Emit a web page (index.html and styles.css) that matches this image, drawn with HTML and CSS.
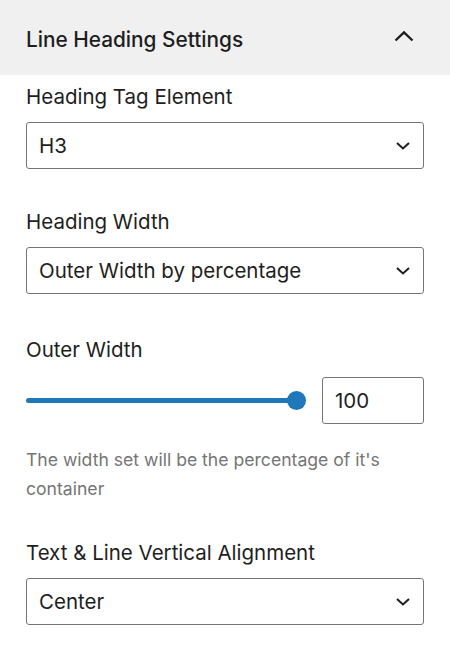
FILE: index.html
```html
<!DOCTYPE html>
<html>
<head>
<meta charset="utf-8">
<link rel="stylesheet" href="styles.css">
</head>
<body>
<div class="panel">
  <div class="panel-header">
    <span class="panel-title">Line Heading Settings</span>
    <svg class="chev-up" width="20" height="12" viewBox="0 0 20 12"><path d="M1.5 10.5 L10 2.5 L18.5 10.5" fill="none" stroke="#1e1e1e" stroke-width="2.4"/></svg>
  </div>
  <div class="panel-body">
    <div class="field first">
      <div class="label">Heading Tag Element</div>
      <div class="select"><span>H3</span><svg class="chev-down" width="14" height="8" viewBox="0 0 14 8"><path d="M1 1 L7 6.5 L13 1" fill="none" stroke="#1e1e1e" stroke-width="2"/></svg></div>
    </div>
    <div class="field">
      <div class="label">Heading Width</div>
      <div class="select"><span>Outer Width by percentage</span><svg class="chev-down" width="14" height="8" viewBox="0 0 14 8"><path d="M1 1 L7 6.5 L13 1" fill="none" stroke="#1e1e1e" stroke-width="2"/></svg></div>
    </div>
    <div class="field range-field">
      <div class="label">Outer Width</div>
      <div class="range-row">
        <div class="slider"><div class="track"></div><div class="thumb"></div></div>
        <div class="num">100</div>
      </div>
      <p class="help">The width set will be the percentage of it's container</p>
    </div>
    <div class="field last">
      <div class="label">Text &amp; Line Vertical Alignment</div>
      <div class="select"><span>Center</span><svg class="chev-down" width="14" height="8" viewBox="0 0 14 8"><path d="M1 1 L7 6.5 L13 1" fill="none" stroke="#1e1e1e" stroke-width="2"/></svg></div>
    </div>
  </div>
</div>
</body>
</html>
```
FILE: styles.css
```css
* { box-sizing: border-box; }
body {
  margin: 0;
  background: #fff;
  font-family: Inter, "Noto Sans", sans-serif;
  color: #1e1e1e;
}
.panel-header {
  height: 75px;
  background: #f0f0f0;
  display: flex;
  align-items: center;
  justify-content: space-between;
  padding: 0 36px 0 26px;
}
.panel-title {
  font-size: 20.8px;
  font-weight: 500;
  margin-top: 3px;
}
.chev-up { margin-top: -3px; }
.panel-body {
  padding: 0 26px;
}
.field { margin-top: 39px; }
.field.first { margin-top: 8px; }
.range-field { margin-top: 42px; }
.field.last { margin-top: 36px; }
.label {
  font-size: 20.5px;
  line-height: 27px;
  height: 27px;
  margin-bottom: 12px;
}
.select {
  height: 47px;
  border: 1.5px solid #757575;
  border-radius: 3px;
  display: flex;
  align-items: center;
  justify-content: space-between;
  padding: 0 13px 0 12px;
  font-size: 20.5px;
}
.chev-down { margin-top: 1px; }
.range-row {
  display: flex;
  align-items: center;
  gap: 16px;
  margin-top: 14px;
}
.slider {
  position: relative;
  flex: 1;
  height: 47px;
}
.track {
  position: absolute;
  left: 0;
  right: 9px;
  top: 21px;
  height: 5px;
  border-radius: 3px;
  background: #1e78b9;
}
.thumb {
  position: absolute;
  right: 0;
  top: 14px;
  width: 19px;
  height: 19px;
  border-radius: 50%;
  background: #1e78b9;
}
.num {
  width: 102px;
  height: 47px;
  border: 1.5px solid #757575;
  border-radius: 3px;
  display: flex;
  align-items: center;
  padding-left: 12px;
  font-size: 20.5px;
}
.help {
  margin: 21px 0 0;
  font-size: 17.6px;
  line-height: 29px;
  color: #757575;
  padding-right: 20px;
}
```
